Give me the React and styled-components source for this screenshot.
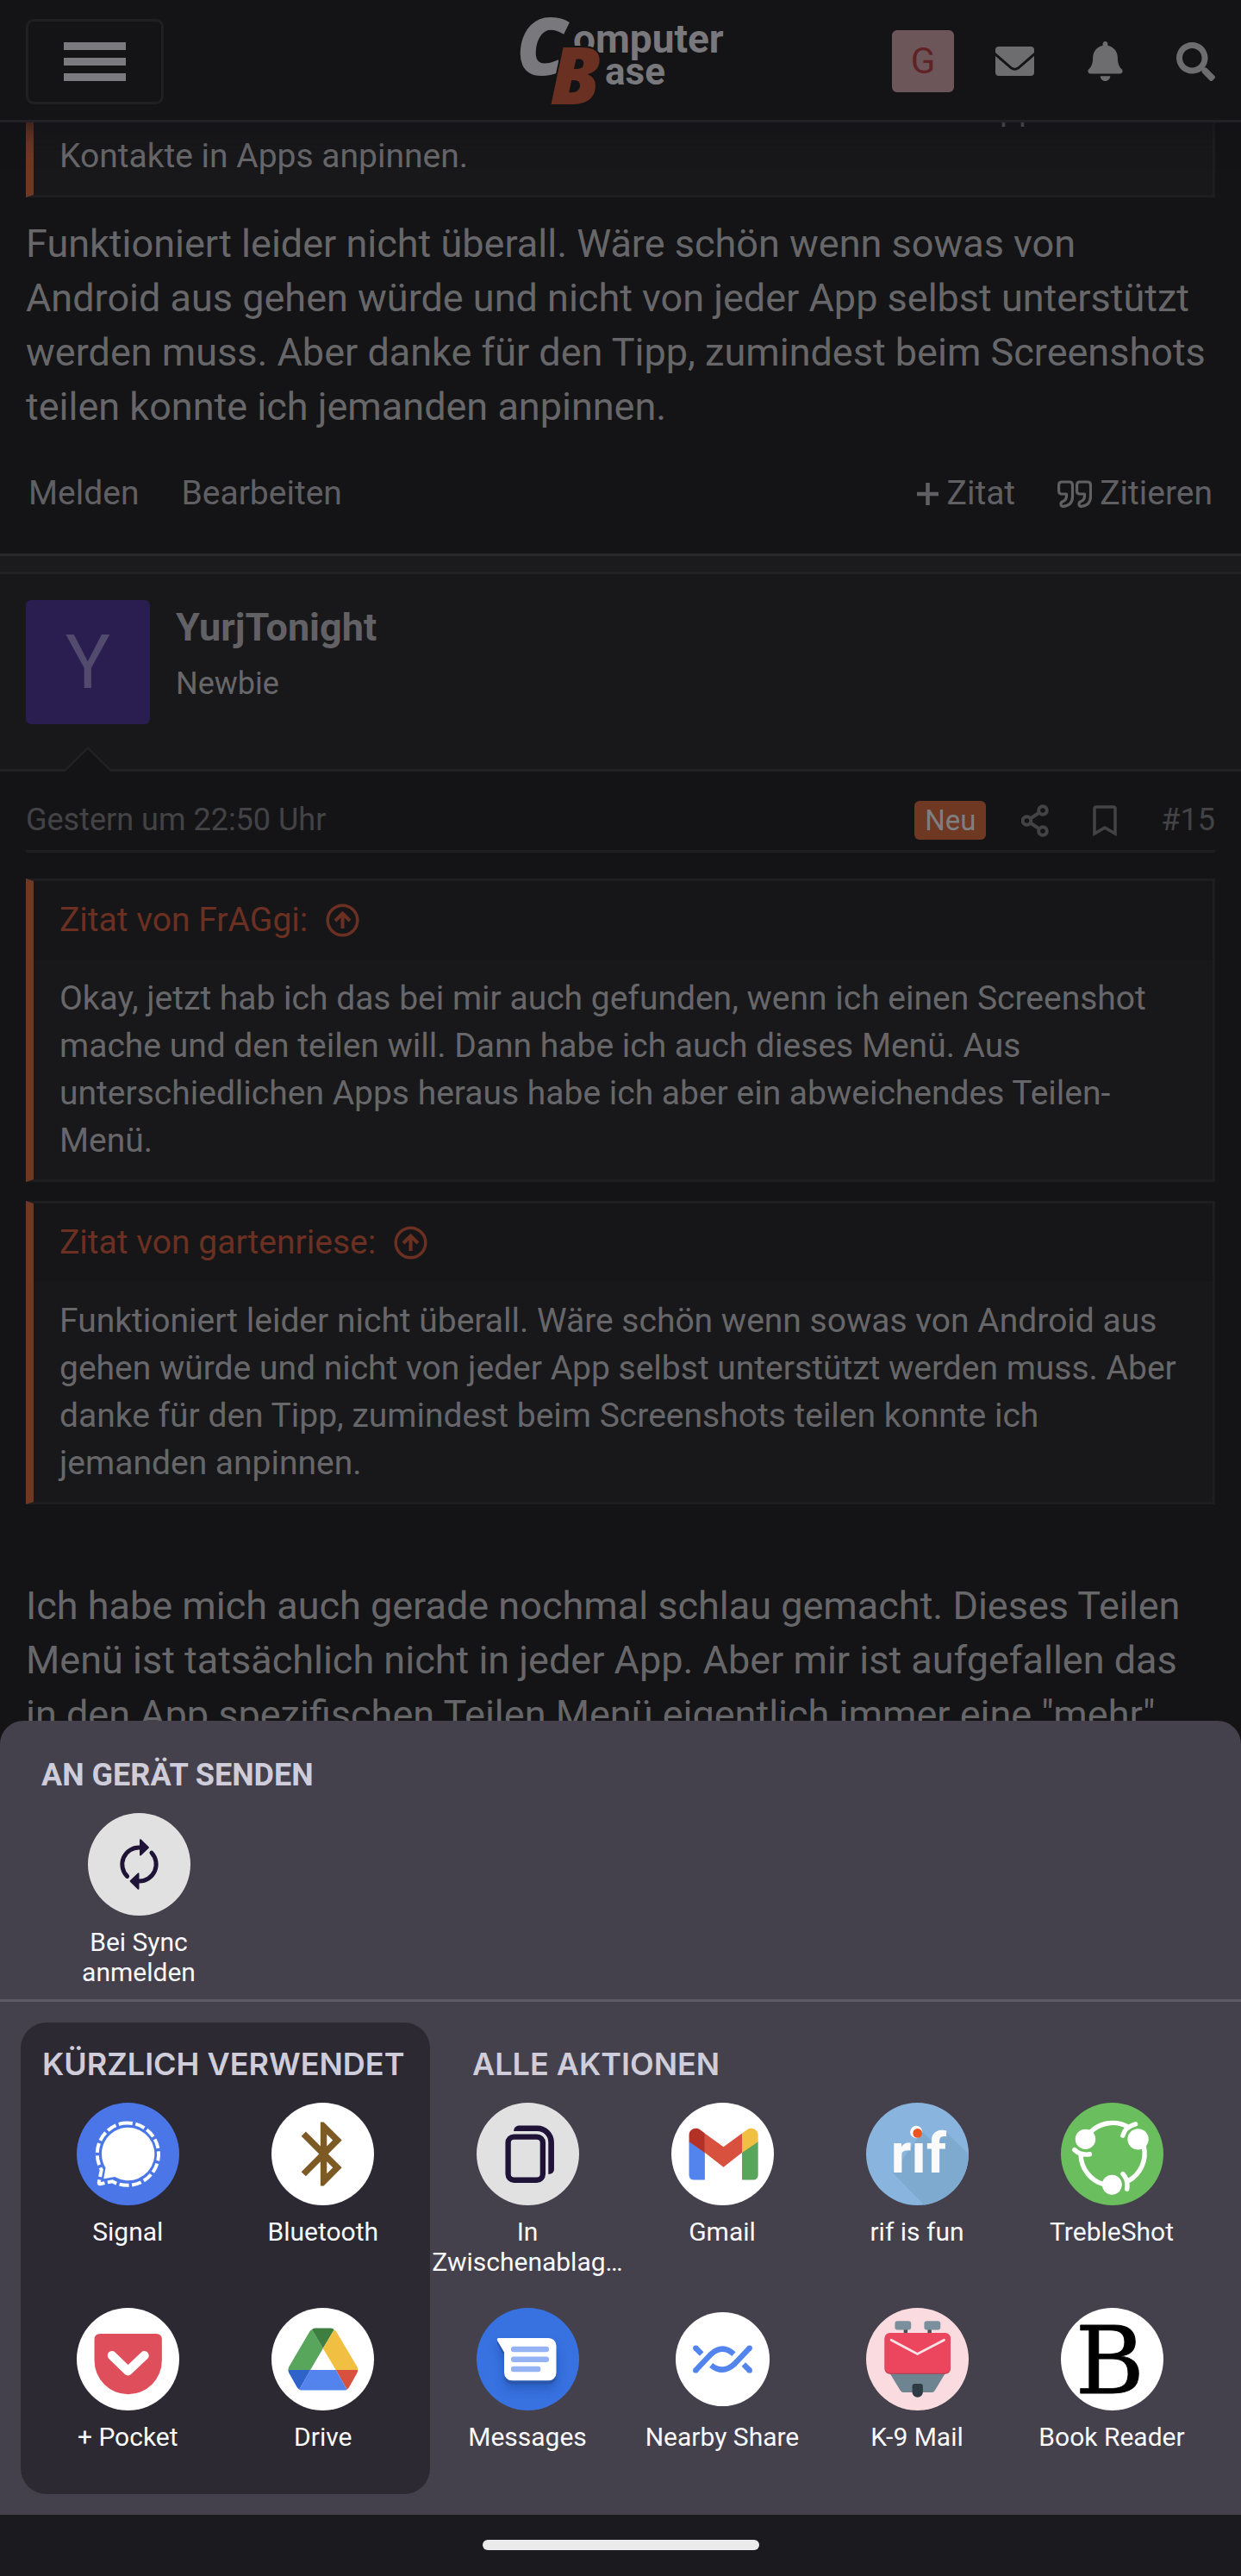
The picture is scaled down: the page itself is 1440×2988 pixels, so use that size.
import styled, { createGlobalStyle } from 'styled-components'
import { FaBell, FaSearch } from 'react-icons/fa'

const recentApps = [
  { name: 'Signal', color: '#4a76e8', Icon: SignalIcon },
  { name: 'Bluetooth', color: '#fff', Icon: BluetoothIcon },
  { name: '+ Pocket', color: '#fff', Icon: PocketIcon },
  { name: 'Drive', color: '#fff', Icon: DriveIcon },
]

const allApps = [
  { name: 'In Zwischenablag…', color: '#e1e1e1', Icon: ClipboardIcon },
  { name: 'Gmail', color: '#fff', Icon: GmailIcon },
  { name: 'rif is fun', color: '#88b4de', Icon: RifIcon },
  { name: 'TrebleShot', color: '#6bbe5d', Icon: TrebleShotIcon },
  { name: 'Messages', color: '#3872e0', Icon: MessagesIcon },
  { name: 'Nearby Share', color: 'transparent', Icon: NearbyIcon },
  { name: 'K-9 Mail', color: '#fadbe0', Icon: K9Icon },
  { name: 'Book Reader', color: '#fff', Icon: BookReaderIcon },
]

export default function App() {
  return (
    <Screen>
      <GlobalStyle />
      <Header>
        <MenuButton aria-label="Menü">
          <span />
          <span />
          <span />
        </MenuButton>
        <Logo />
        <HeaderTools>
          <SmallAvatar href="#konto">G</SmallAvatar>
          <HeaderIcons>
            <IconButton aria-label="Nachrichten">
              <MailIcon />
            </IconButton>
            <IconButton aria-label="Hinweise">
              <FaBell size={46} />
            </IconButton>
            <IconButton aria-label="Suche">
              <FaSearch size={45} />
            </IconButton>
          </HeaderIcons>
        </HeaderTools>
      </Header>

      <Thread>
        <Post>
          <ScrolledQuote>
            <QuoteText>
              Man kann auf manchen Herstellern auch Kontakte oder diese Apps und
              <br />
              Kontakte in Apps anpinnen.
            </QuoteText>
          </ScrolledQuote>
          <PostText>
            Funktioniert leider nicht überall. Wäre schön wenn sowas von Android
            aus gehen würde und nicht von jeder App selbst unterstützt werden
            muss. Aber danke für den Tipp, zumindest beim Screenshots teilen
            konnte ich jemanden anpinnen.
          </PostText>
          <PostActions>
            <ActionGroup>
              <a href="#melden">Melden</a>
              <a href="#bearbeiten">Bearbeiten</a>
            </ActionGroup>
            <ActionGroup>
              <a href="#zitat">
                <PlusIcon />
                Zitat
              </a>
              <a href="#zitieren">
                <QuoteIcon />
                Zitieren
              </a>
            </ActionGroup>
          </PostActions>
        </Post>

        <Divider />

        <Author>
          <Avatar>Y</Avatar>
          <AuthorInfo>
            <h3>YurjTonight</h3>
            <p>Newbie</p>
          </AuthorInfo>
          <AuthorArrow viewBox="0 0 54 29">
            <path d="M0 29L27 1.5L54 29Z" fill="#141416" />
            <path
              d="M0 28L27 1.5L54 28"
              fill="none"
              stroke="#222224"
              strokeWidth="2.5"
            />
          </AuthorArrow>
        </Author>

        <Post>
          <PostMeta>
            <time>Gestern um 22:50 Uhr</time>
            <MetaTools>
              <Badge>Neu</Badge>
              <MetaIcons>
                <IconButton aria-label="Teilen">
                  <ShareIcon />
                </IconButton>
                <IconButton aria-label="Lesezeichen">
                  <BookmarkIcon />
                </IconButton>
                <a href="#15">#15</a>
              </MetaIcons>
            </MetaTools>
          </PostMeta>
          <Quotes>
            <Quote>
              <QuoteHead href="#fraggi">
                Zitat von FrAGgi:
                <CircleArrowIcon />
              </QuoteHead>
              <QuoteText>
                Okay, jetzt hab ich das bei mir auch gefunden, wenn ich einen
                Screenshot mache und den teilen will. Dann habe ich auch dieses
                Menü. Aus unterschiedlichen Apps heraus habe ich aber ein
                abweichendes Teilen-Menü.
              </QuoteText>
            </Quote>
            <Quote>
              <QuoteHead href="#gartenriese">
                Zitat von gartenriese:
                <CircleArrowIcon />
              </QuoteHead>
              <QuoteText>
                Funktioniert leider nicht überall. Wäre schön wenn sowas von
                Android aus gehen würde und nicht von jeder App selbst
                unterstützt werden muss. Aber danke für den Tipp, zumindest beim
                Screenshots teilen konnte ich jemanden anpinnen.
              </QuoteText>
            </Quote>
          </Quotes>
          <PostText>
            Ich habe mich auch gerade nochmal schlau gemacht. Dieses Teilen Menü
            ist tatsächlich nicht in jeder App. Aber mir ist aufgefallen das in
            den App spezifischen Teilen Menü eigentlich immer eine "mehr"
          </PostText>
        </Post>
      </Thread>

      <ShareOverlay>
        <Sheet>
          <SendSection>
            <SheetTitle>AN GERÄT SENDEN</SheetTitle>
            <DeviceList>
              <ShareTarget
                name="Bei Sync anmelden"
                color="#e1e1e1"
                Icon={SyncIcon}
              />
            </DeviceList>
          </SendSection>
          <AppSection>
            <RecentPanel>
              <AppTitle>KÜRZLICH VERWENDET</AppTitle>
              <AppGrid columns={2}>
                {recentApps.map((app) => (
                  <ShareTarget key={app.name} {...app} />
                ))}
              </AppGrid>
            </RecentPanel>
            <AllPanel>
              <AppTitle>ALLE AKTIONEN</AppTitle>
              <AppGrid columns={4}>
                {allApps.map((app) => (
                  <ShareTarget key={app.name} {...app} />
                ))}
              </AppGrid>
            </AllPanel>
          </AppSection>
        </Sheet>
        <NavBar>
          <span />
        </NavBar>
      </ShareOverlay>
    </Screen>
  )
}

function ShareTarget({ name, color, Icon }) {
  return (
    <Target>
      <TargetIcon color={color}>
        <Icon />
      </TargetIcon>
      <span>{name}</span>
    </Target>
  )
}

function Logo() {
  return (
    <LogoSvg viewBox="0 0 240 102" role="img" aria-label="ComputerBase">
      <g fontFamily="Roboto, sans-serif" fill="#79787c">
        <text x="65" y="41" fontSize="46" fontWeight="700">
          omputer
        </text>
        <text x="102" y="78" fontSize="44" fontWeight="700">
          ase
        </text>
      </g>
      <g
        fontFamily="'Open Sans', sans-serif"
        fontSize="93"
        fontWeight="800"
        fontStyle="italic"
      >
        <text x="-1" y="67" fill="#79787c">
          C
        </text>
        <text
          x="38"
          y="101"
          fill="#6a3021"
          stroke="#141416"
          strokeWidth="4"
          paintOrder="stroke"
        >
          B
        </text>
      </g>
    </LogoSvg>
  )
}

function MailIcon() {
  return (
    <svg width="45" height="34" viewBox="0 0 45 34" fill="currentColor">
      <path d="M4 0H41Q45 0 45 4V7L26 23.500Q22.500 26 19 23.500L0 7V4Q0 0 4 0Z" />
      <path d="M0 11L17.500 26Q22.500 29.500 27.500 26L45 11V30Q45 34 41 34H4Q0 34 0 30Z" />
    </svg>
  )
}

function PlusIcon() {
  return (
    <svg width="27" height="28" viewBox="0 0 27 28">
      <path
        d="M13.500 1V27M1 14H26"
        stroke="currentColor"
        strokeWidth="4.500"
      />
    </svg>
  )
}

function QuoteIcon() {
  return (
    <svg
      width="40"
      height="32"
      viewBox="0 0 40 32"
      fill="none"
      stroke="currentColor"
      strokeWidth="3.2"
      strokeLinejoin="round"
    >
      {[0, 21].map((x) => (
        <path
          key={x}
          transform={`translate(${x} 0)`}
          d="M5 2H14Q17.500 2 17.500 6V19Q17.500 29 7 30.400Q4 30.500 4 27.500Q4 25.500 6.500 24.500Q10.500 23 10.500 18V16H5Q1.600 16 1.600 12.500V5.500Q1.600 2 5 2Z"
        />
      ))}
    </svg>
  )
}

function ShareIcon() {
  return (
    <svg
      width="32"
      height="38"
      viewBox="0 0 32 38"
      fill="none"
      stroke="currentColor"
      strokeWidth="4"
    >
      <circle cx="6.500" cy="19" r="4.800" />
      <circle cx="25" cy="7" r="4.800" />
      <circle cx="25" cy="31" r="4.800" />
      <path d="M10.500 16.500L21 9.500M10.500 21.500L21 28.500" />
    </svg>
  )
}

function BookmarkIcon() {
  return (
    <svg
      width="30"
      height="38"
      viewBox="0 0 30 38"
      fill="none"
      stroke="currentColor"
      strokeWidth="3.500"
    >
      <path d="M3 34V5Q3 3 5 3H25Q27 3 27 5V34L15 27Z" />
    </svg>
  )
}

function CircleArrowIcon() {
  return (
    <svg
      width="39"
      height="39"
      viewBox="0 0 39 39"
      fill="none"
      stroke="currentColor"
      strokeWidth="3.500"
    >
      <circle cx="19.500" cy="19.500" r="17.300" />
      <path d="M19.500 29V12M11 20L19.500 11.500L28 20" strokeWidth="4" />
    </svg>
  )
}

function SyncIcon() {
  return (
    <svg viewBox="0 0 120 120">
      <g fill="none" stroke="#1f1438" strokeWidth="5" strokeLinecap="round">
        <path d="M74.500 46.500A19.700 19.700 0 0 1 60 79.700" />
        <path d="M46 74A19.700 19.700 0 0 1 60.500 40.300" />
      </g>
      <g
        fill="#1f1438"
        stroke="#1f1438"
        strokeWidth="2"
        strokeLinejoin="round"
      >
        <path d="M61.500 31.500V49L70.500 40.300Z" />
        <path d="M59 71V88.500L50 79.700Z" />
      </g>
    </svg>
  )
}

function SignalIcon() {
  return (
    <svg viewBox="0 0 120 120">
      <path
        d="M60 29A31 31 0 1 1 44.500 86.800L31.500 89L33.800 76.200A31 31 0 0 1 60 29Z"
        fill="#fff"
      />
      <path
        d="M54.300 24A36.500 36.500 0 1 1 41.500 92L27.500 95Q25.500 95 26 93L29 78.500A36.500 36.500 0 0 1 54.300 24"
        fill="none"
        stroke="#fff"
        strokeWidth="4"
        strokeDasharray="11.200 3.500"
      />
    </svg>
  )
}

function BluetoothIcon() {
  return (
    <svg viewBox="0 0 120 120">
      <path
        transform="translate(16.3 15.2) scale(3.73)"
        d="M17.710 7.710L12 2h-1v7.590L6.410 5 5 6.410 10.590 12 5 17.590 6.410 19 11 14.410V22h1l5.710-5.710-4.300-4.290 4.300-4.290zM13 5.830l1.880 1.880L13 9.590V5.830zm1.880 10.460L13 18.170v-3.760l1.880 1.880z"
        fill="#7d5923"
      />
    </svg>
  )
}

function PocketIcon() {
  return (
    <svg viewBox="0 0 120 120">
      <path
        d="M27.500 30.300H92.900Q99.700 30.300 99.700 37V61.500A39.500 39.500 0 0 1 20.700 61.500V37Q20.700 30.300 27.500 30.300Z"
        fill="#df4f5b"
      />
      <path
        d="M41.300 55.700L60 73.800L79.200 55.700"
        fill="none"
        stroke="#fff"
        strokeWidth="10.500"
        strokeLinecap="round"
        strokeLinejoin="round"
      />
    </svg>
  )
}

function DriveIcon() {
  return (
    <svg viewBox="0 0 120 120">
      <path
        d="M47.300 25.500L60.300 47.300L45.500 72.700H19.700Q19.500 70.500 20.500 68.800L44.500 28Q45.500 26.200 47.300 25.500Z"
        fill="#58a55c"
      />
      <path
        d="M47.300 25.500Q48.500 23.700 51 23.700H69.500Q72 23.700 73.300 25.500L60.300 47.300Z"
        fill="#3e7f41"
      />
      <path
        d="M73.300 25.500Q75 26.200 76 28L100.200 68.800Q101 70.500 101 72.700H75.300L60.300 47.300Z"
        fill="#f1bf42"
      />
      <path
        d="M75.300 72.700H101Q101 74.500 100.200 76.200L91 92.500Q90 94.500 88.300 95.500Z"
        fill="#d8513f"
      />
      <path
        d="M45.500 72.700H75.300L88.300 95.500Q87 96.400 85 96.400H36Q34 96.400 32.500 95.500Z"
        fill="#5384ee"
      />
      <path
        d="M19.700 72.700H45.500L32.500 95.500Q31 94.500 30 93L20.500 76.200Q19.500 74.500 19.700 72.700Z"
        fill="#2f63ca"
      />
    </svg>
  )
}

function ClipboardIcon() {
  return (
    <svg viewBox="0 0 120 120">
      <rect
        x="36.900"
        y="39.900"
        width="40.600"
        height="50.600"
        rx="7"
        fill="none"
        stroke="#1f1438"
        strokeWidth="6.400"
      />
      <path
        d="M43.500 33.300C43.500 29 46.500 26.700 50 26.700H71A19.700 19.700 0 0 1 90.700 46.400V78C90.700 81.500 88 83.700 84 83.700V46.300A13 13 0 0 0 71 33.300Z"
        fill="#1f1438"
      />
    </svg>
  )
}

function GmailIcon() {
  return (
    <svg viewBox="0 0 120 120">
      <path d="M20.700 45V84.500Q20.700 90.300 26.500 90.300H39.200V58Z" fill="#5384ee" />
      <path
        d="M101.500 45V84.500Q101.500 90.300 95.700 90.300H82.700V58Z"
        fill="#58a55c"
      />
      <path d="M39 35.700L61 51.800L82.800 35.700V58.300L61 75.300L39 58.300Z" fill="#d8513f" />
      <path
        d="M20.700 45.700V38.200C20.700 31 28.500 27.600 34.200 32L39.200 35.800V58.500Z"
        fill="#b33127"
      />
      <path
        d="M101.500 45.700V38.200C101.500 31 93.700 27.600 88 32L82.700 35.800V58.500Z"
        fill="#f1bf42"
      />
    </svg>
  )
}

function RifIcon() {
  return (
    <svg viewBox="0 0 120 120">
      <path d="M92 33L120 60V120H68L31 82L66 34L82 50Z" fill="#7faad0" />
      <text
        x="29"
        y="82"
        fontFamily="Roboto, sans-serif"
        fontSize="65"
        fontWeight="700"
        fill="#fafafa"
      >
        rıf
      </text>
      <circle cx="58.700" cy="34.300" r="7.200" fill="#fafafa" />
      <circle cx="60.200" cy="35.700" r="5.400" fill="#ee5523" />
    </svg>
  )
}

function TrebleShotIcon() {
  return (
    <svg viewBox="0 0 120 120">
      <g fill="#fff">
        <circle cx="28.700" cy="42.700" r="11.800" />
        <circle cx="90.300" cy="42.700" r="12.300" />
        <circle cx="59.800" cy="96" r="11.600" />
      </g>
      <g fill="none" stroke="#fff" strokeWidth="5.500" strokeLinecap="round">
        <path d="M34.500 34.500A36.800 36.800 0 0 1 79 28.500" />
        <path d="M97 51A36.800 36.800 0 0 1 79 91.500" />
        <path d="M23.300 61A36.800 36.800 0 0 0 50 95.500" />
        <path d="M87.300 25Q75 28 72.500 38.500" />
        <path d="M72.500 83.300Q79 90 77.300 101" />
        <path d="M16 55.200Q23 62 33.700 60.300" />
      </g>
    </svg>
  )
}

function MessagesIcon() {
  const bubble =
    'M26 35.300H84.300A9 9 0 0 1 93.300 44.300V76A9 9 0 0 1 84.300 85H41.300A9 9 0 0 1 32.300 76V52L24.500 38.500Q23 35.300 26 35.300Z'

  return (
    <svg viewBox="0 0 120 120">
      <defs>
        <filter id="soft" x="-30%" y="-30%" width="160%" height="180%">
          <feGaussianBlur stdDeviation="6" />
        </filter>
      </defs>
      <path
        d={bubble}
        transform="translate(0 9)"
        fill="#1e4ca5"
        opacity="0.6"
        filter="url(#soft)"
      />
      <path d={bubble} transform="translate(0 4)" fill="#2a57ab" />
      <path d={bubble} fill="#fff" />
      <path
        d="M43.500 48.500H81.500M43.500 60.200H81.500M43.500 71.500H71.800"
        stroke="#95b3f4"
        strokeWidth="6.500"
        strokeLinecap="round"
      />
    </svg>
  )
}

function NearbyIcon() {
  return (
    <svg viewBox="0 0 120 120">
      <circle cx="60" cy="60" r="55" fill="#fff" />
      <g fill="none" stroke="#5384ee" strokeWidth="6.500">
        <path d="M28.500 73L46.500 54Q60 42 73 54" />
        <path d="M91.500 47L73.500 66Q60 78 46.500 67" />
        <path d="M28.500 47L35.500 54M84.500 66L91.500 73" />
      </g>
      <g fill="#5384ee">
        <circle cx="28.500" cy="73" r="3.200" />
        <circle cx="28.500" cy="47" r="3.200" />
        <circle cx="91.500" cy="73" r="3.200" />
        <circle cx="91.500" cy="47" r="3.200" />
      </g>
    </svg>
  )
}

function K9Icon() {
  return (
    <svg viewBox="0 0 120 120">
      <path d="M44 24H48.500V31H44ZM72 24H76.500V31H72Z" fill="#44535b" />
      <rect x="33.700" y="15.300" width="18.900" height="10.400" rx="3" fill="#7a909c" />
      <rect x="68" y="15.300" width="19" height="10.400" rx="3" fill="#7a909c" />
      <path
        d="M27.300 76H93L80.500 96.500Q79.200 98.700 77 98.700H43.500Q41.500 98.700 40 96.500Z"
        fill="#6f8491"
      />
      <rect x="21.700" y="30" width="77" height="47.500" rx="6" fill="#a93c50" />
      <rect x="21.700" y="29.300" width="77" height="47" rx="6" fill="#eb465d" />
      <path
        d="M29.300 37.500L60 54L91.300 37.500"
        fill="none"
        stroke="#fbe3e6"
        strokeWidth="2.800"
        strokeLinecap="round"
      />
      <path
        d="M57 88.700H63.500Q66.400 88.700 66.400 91.500V98.500A6.200 6.200 0 0 1 54 98.500V91.500Q54 88.700 57 88.700Z"
        fill="#2f3b42"
      />
    </svg>
  )
}

function BookReaderIcon() {
  return (
    <svg viewBox="0 0 120 120">
      <text
        x="17"
        y="100"
        fontFamily="'DejaVu Serif', serif"
        fontSize="110"
        fill="#000"
        stroke="#000"
        strokeWidth="1"
        strokeLinejoin="round"
      >
        B
      </text>
    </svg>
  )
}

const GlobalStyle = createGlobalStyle`
  * {
    box-sizing: border-box;
  }

  body {
    margin: 0;
    background: #141416;
    color: #67676a;
    font-family: Roboto, sans-serif;
  }

  h2, h3, p {
    margin: 0;
  }

  a {
    color: inherit;
    text-decoration: none;
  }

  button {
    border: 0;
    padding: 0;
    background: none;
    color: inherit;
    font: inherit;
  }
`

const Screen = styled.div`
  position: relative;
  display: flex;
  flex-direction: column;
  height: 100vh;
  overflow: hidden;
`

const Header = styled.header`
  flex: none;
  display: grid;
  grid-template-columns: 1fr auto 1fr;
  align-items: center;
  padding: 20px 30px 17px;
  background: #141416;
  border-bottom: 3px solid #222226;
  box-shadow: 0 0 36px #121119;
  z-index: 1;
`

const MenuButton = styled.button`
  display: flex;
  flex-direction: column;
  align-items: center;
  justify-content: center;
  gap: 9px;
  width: 160px;
  height: 99px;
  border: 3px solid #202022;
  border-radius: 9px;

  span {
    width: 72px;
    height: 9px;
    background: #7b7a7f;
  }
`

const LogoSvg = styled.svg`
  width: 240px;
  height: 102px;
  overflow: visible;
`

const HeaderTools = styled.div`
  display: flex;
  align-items: center;
  justify-content: flex-end;
  gap: 48px;
`

const SmallAvatar = styled.a`
  width: 72px;
  height: 72px;
  border-radius: 6px;
  background: #6d565a;
  color: #5f2325;
  font-size: 42px;
  line-height: 72px;
  text-align: center;
`

const HeaderIcons = styled.div`
  display: flex;
  align-items: center;
  gap: 60px;
  color: #6d6d70;
`

const IconButton = styled.button`
  display: flex;
  align-items: center;
  justify-content: center;

  ${HeaderIcons} & {
    width: 45px;
  }
`

const Thread = styled.main`
  flex: 1;
  min-height: 0;
  overflow: hidden;
`

const Post = styled.article`
  padding: 0 30px;
`

const Quote = styled.blockquote`
  margin: 0;
  border: 3px solid #1e1e20;
  border-left: 9px solid #6e3823;
  background: #18181a;
`

/* the top of this quote is scrolled under the header */
const ScrolledQuote = styled(Quote)`
  margin-top: -61px;
  border-top: 0;
`

const QuoteHead = styled.a`
  display: flex;
  align-items: center;
  gap: 21px;
  padding: 18px 30px;
  background: #161618;
  color: #6b3021;
  font-size: 39px;
  line-height: 55px;
`

const QuoteText = styled.p`
  padding: 18px 30px 17px;
  font-size: 39px;
  line-height: 55px;
`

const Quotes = styled.div`
  display: flex;
  flex-direction: column;
  gap: 22px;
  margin: 30px 0 64px;
`

const PostText = styled.p`
  padding-top: 22px;
  font-size: 45px;
  line-height: 63px;
`

const PostActions = styled.div`
  display: flex;
  justify-content: space-between;
  padding: 42px 3px;
  color: #606064;
  font-size: 39px;
  line-height: 55px;
`

const ActionGroup = styled.div`
  display: flex;
  gap: 49px;

  a {
    display: flex;
    align-items: center;
    gap: 9px;
  }
`

const Divider = styled.div`
  height: 24px;
  background: #1b1b1d;
  border-top: 3px solid #29292b;
  border-bottom: 3px solid #222224;
`

const Author = styled.section`
  position: relative;
  display: flex;
  gap: 30px;
  padding: 30px 30px 52px;
  background: #18181a;
  border-bottom: 3px solid #222224;
`

const Avatar = styled.div`
  width: 144px;
  height: 144px;
  border-radius: 6px;
  background: #2a1e50;
  color: #534b6d;
  font-size: 87px;
  line-height: 144px;
  text-align: center;
`

const AuthorInfo = styled.div`
  padding-top: 5px;

  h3 {
    color: #626266;
    font-size: 45px;
    font-weight: 700;
    line-height: 54px;
  }

  p {
    margin-top: 16px;
    font-size: 36px;
    line-height: 45px;
  }
`

const AuthorArrow = styled.svg`
  position: absolute;
  left: 75px;
  bottom: -3px;
  width: 54px;
  height: 29px;
`

const PostMeta = styled.div`
  display: flex;
  justify-content: space-between;
  padding: 34px 0 12px;
  border-bottom: 3px solid #1e1e20;
  color: #434346;
  font-size: 36px;
  line-height: 45px;
`

const MetaTools = styled.div`
  display: flex;
  gap: 41px;
`

const MetaIcons = styled.div`
  display: flex;
  gap: 50px;
`

const Badge = styled.span`
  padding: 0 12px;
  border-radius: 6px;
  background: #6e3823;
  color: #7f7f82;
  font-size: 33px;
`

const ShareOverlay = styled.div`
  position: absolute;
  left: 0;
  right: 0;
  bottom: 0;
  z-index: 2;
`

const Sheet = styled.section`
  border-radius: 27px 27px 0 0;
  background: #44414c;
`

const SendSection = styled.div`
  padding: 41px 48px 14px;
  border-bottom: 3px solid #5c5a66;
`

const SheetTitle = styled.h2`
  color: #cfcdda;
  font-size: 36px;
  font-weight: 700;
  line-height: 44px;
`

const DeviceList = styled.div`
  display: grid;
  grid-template-columns: 226px;
  margin-top: 22px;
`

const AppSection = styled.div`
  display: grid;
  grid-template-columns: 475px 1fr;
  padding: 24px 0 24px 24px;
`

const AppTitle = styled(SheetTitle)`
  font-family: Inter, sans-serif;
  font-weight: 600;
  white-space: nowrap;
`

const RecentPanel = styled.div`
  padding: 26px 11px 14px;
  border-radius: 30px;
  background: #2c2933;

  ${AppTitle} {
    padding-left: 14px;
  }
`

const AllPanel = styled.div`
  padding: 26px 37px 14px 0;

  ${AppTitle} {
    padding-left: 49px;
  }
`

const AppGrid = styled.div`
  display: grid;
  grid-template-columns: repeat(${(props) => props.columns}, 1fr);
  row-gap: 36px;
  margin-top: 23px;
`

const Target = styled.button`
  display: flex;
  flex-direction: column;
  align-items: center;
  gap: 13px;
  color: #f9f9fb;
  font-size: 30px;
  line-height: 35px;

  > span {
    min-height: 70px;
  }
`

const TargetIcon = styled.div`
  width: 119px;
  height: 119px;
  overflow: hidden;
  border-radius: 50%;
  background: ${(props) => props.color};

  svg {
    display: block;
  }
`

const NavBar = styled.nav`
  display: flex;
  justify-content: center;
  padding: 29px 0 30px;
  background: #1b1a1e;

  span {
    width: 321px;
    height: 12px;
    border-radius: 6px;
    background: #ebebeb;
  }
`
